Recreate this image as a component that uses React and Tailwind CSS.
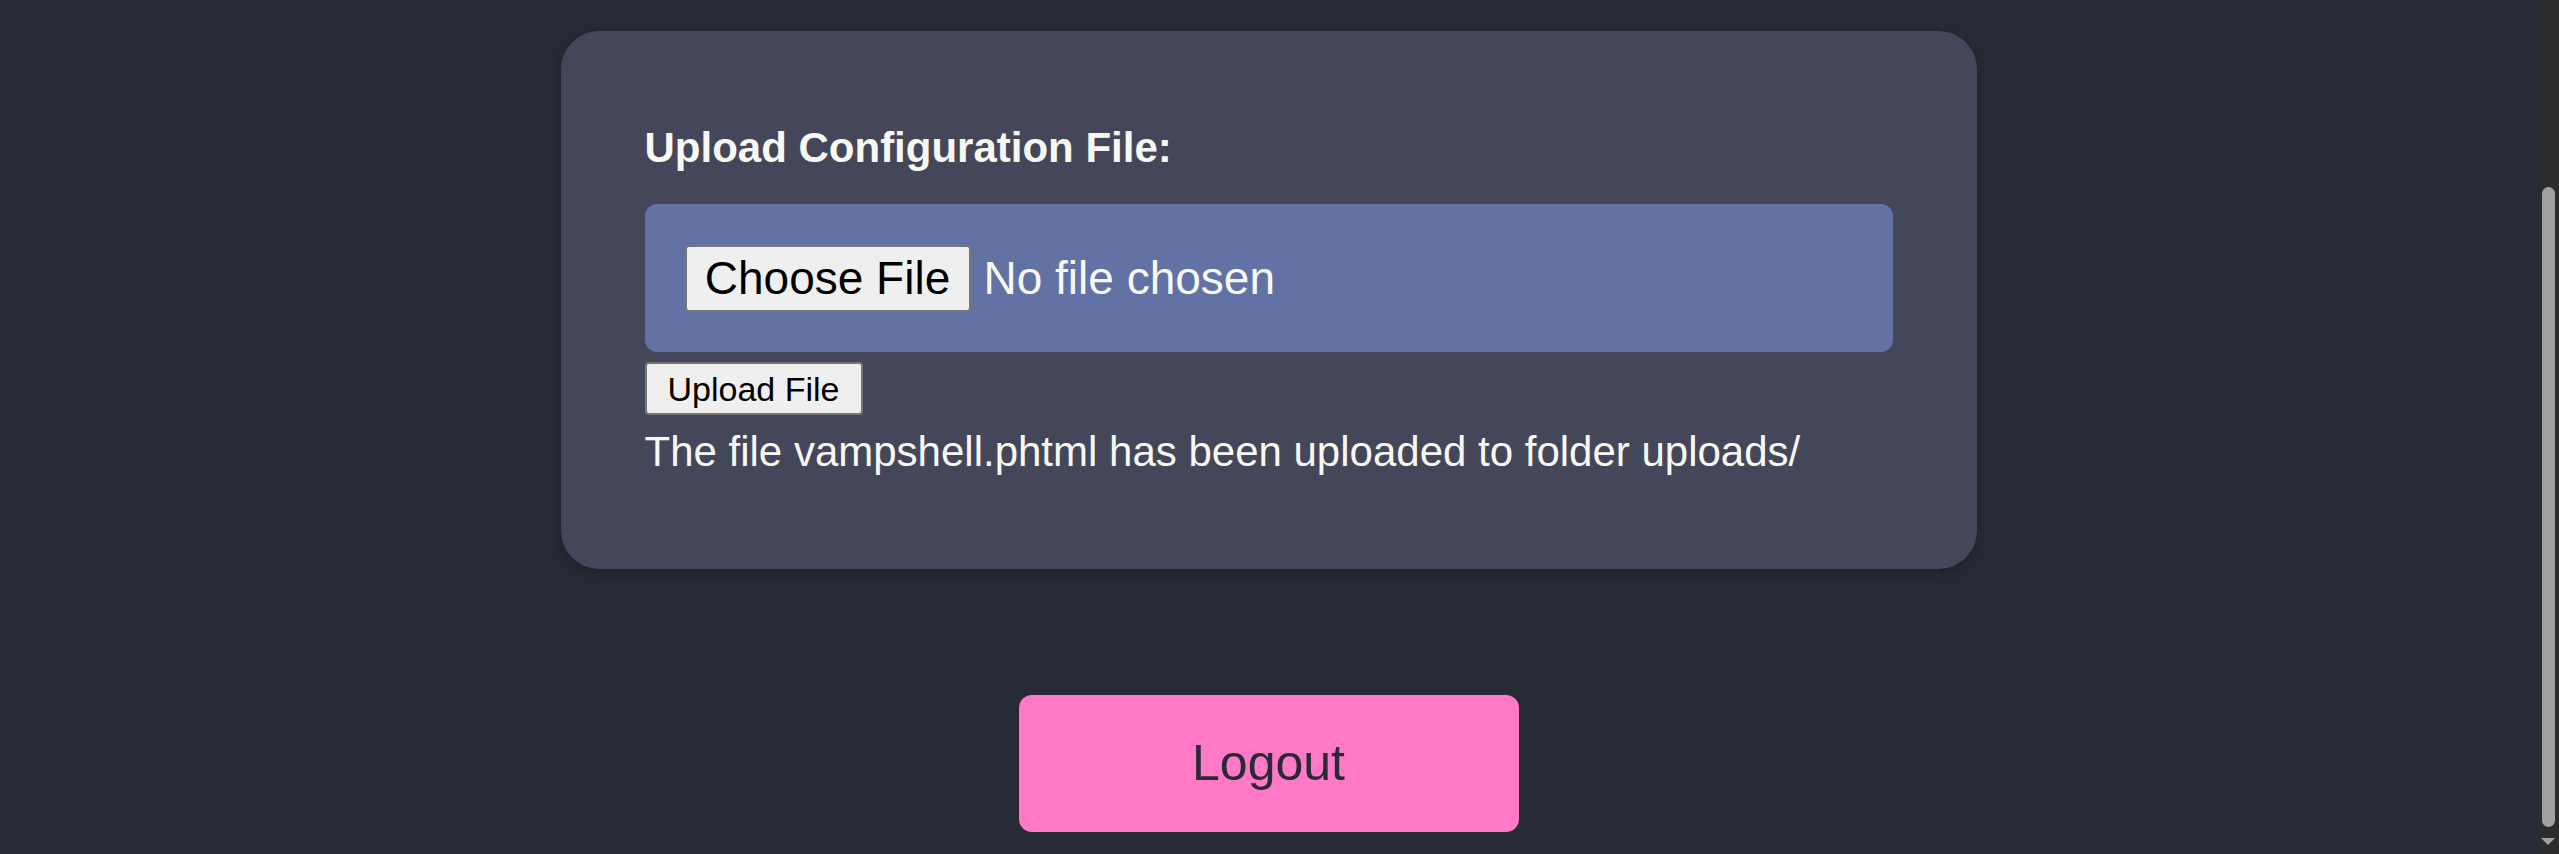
const App = () => {
  return (
    <div className="flex h-[854px] w-full overflow-hidden bg-[#282a36] font-['Liberation_Sans',Arial,sans-serif]">
      <main className="flex flex-1 flex-col items-center pt-[31px]">
        <section className="w-[1416px] rounded-[38px] bg-[#44475a] px-[84px] py-[93px] shadow-[0_4px_14px_rgba(0,0,0,0.25)]">
          <label className="block text-[42px] font-bold leading-[48px] text-[#f8f8f2]">
            Upload Configuration File:
          </label>
          <div className="mt-[32px] flex h-[148px] items-center rounded-[12px] bg-[#6272a4] px-[40px]">
            <span className="flex h-[67px] w-[286px] items-center justify-center rounded-[4px] border-2 border-[#767676] bg-[#efefef] text-[46px] leading-none text-black">
              Choose File
            </span>
            <span className="ml-[13px] text-[46px] leading-none text-[#f8f8f2]">No file chosen</span>
          </div>
          <button className="mt-[10px] flex h-[53px] w-[218px] items-center justify-center rounded-[4px] border-2 border-[#767676] bg-[#efefef] text-[34px] leading-none text-black">
            Upload File
          </button>
          <p className="mt-[13px] text-[42px] leading-[48px] text-[#f8f8f2]">
            The file vampshell.phtml has been uploaded to folder uploads/
          </p>
        </section>
        <button className="mt-[126px] h-[137px] w-[500px] rounded-[13px] bg-[#ff79c6] text-[50px] text-[#282a36]">
          Logout
        </button>
      </main>
      <div className="flex w-[22px] flex-col items-center bg-[#2c2c2c]">
        <div className="mt-[187px] h-[640px] w-[13px] rounded-full bg-[#a0a0a0]" />
        <svg className="mt-[11px]" width="14" height="8" viewBox="0 0 14 8">
          <path d="M0 0 L14 0 L7 7 Z" fill="#a0a0a0" />
        </svg>
      </div>
    </div>
  );
};

export default App;
